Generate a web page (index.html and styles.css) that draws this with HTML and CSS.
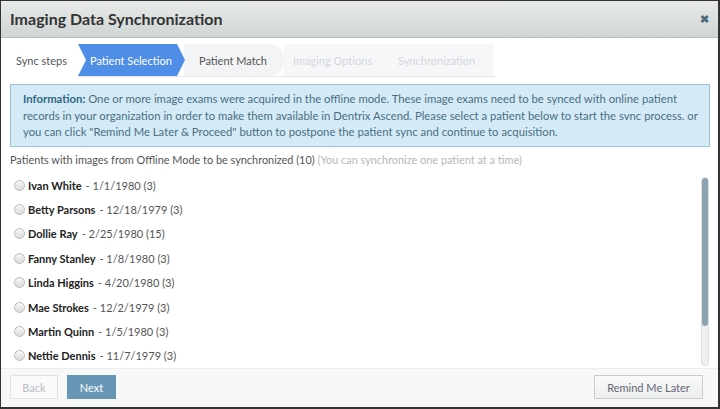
FILE: index.html
```html
<!DOCTYPE html>
<html>
<head>
<meta charset="utf-8">
<link rel="stylesheet" href="styles.css">
</head>
<body>
<div class="dialog">
  <div class="titlebar">
    <div class="title">Imaging Data Synchronization</div>
    <div class="close">&#x2716;</div>
  </div>
  <div class="steps">
    <div class="step-label">Sync steps</div>
    <div class="step-track">
      <div class="step active">Patient Selection</div>
      <div class="step next">Patient Match</div>
      <div class="step disabled">Imaging Options</div>
      <div class="step disabled">Synchronization</div>
    </div>
  </div>
  <div class="info"><b>Information:</b> One or more image exams were acquired in the offline mode. These image exams need to be synced with online patient<br>records in your organization in order to make them available in Dentrix Ascend. Please select a patient below to start the svnc process. or<br>you can click "Remind Me Later &amp; Proceed" button to postpone the patient sync and continue to acquisition.</div>
  <div class="caption">Patients with images from Offline Mode to be synchronized (10) <span class="muted">(You can synchronize one patient at a time)</span></div>
  <div class="list-wrap">
    <ul class="list">
      <li><span class="radio"></span><b>Ivan White</b> - 1/1/1980 (3)</li>
      <li><span class="radio"></span><b>Betty Parsons</b> - 12/18/1979 (3)</li>
      <li><span class="radio"></span><b>Dollie Ray</b> - 2/25/1980 (15)</li>
      <li><span class="radio"></span><b>Fanny Stanley</b> - 1/8/1980 (3)</li>
      <li><span class="radio"></span><b>Linda Higgins</b> - 4/20/1980 (3)</li>
      <li><span class="radio"></span><b>Mae Strokes</b> - 12/2/1979 (3)</li>
      <li><span class="radio"></span><b>Martin Quinn</b> - 1/5/1980 (3)</li>
      <li><span class="radio"></span><b>Nettie Dennis</b> - 11/7/1979 (3)</li>
    </ul>
    <div class="scrollbar"><div class="thumb"></div></div>
  </div>
  <div class="footer">
    <div class="btn back">Back</div>
    <div class="btn primary">Next</div>
    <div class="spacer"></div>
    <div class="btn remind">Remind Me Later</div>
  </div>
</div>
</body>
</html>
```
FILE: styles.css
```css
* { box-sizing: border-box; }
html, body { margin: 0; padding: 0; }
body {
  width: 720px; height: 409px; overflow: hidden;
  font-family: Lato, "Open Sans", sans-serif;
  color: #444;
  background: #222;
}
.dialog {
  width: 720px; height: 409px;
  border: 1px solid #333;
  border-width: 1px 2px 2px 1px;
  background: #fff;
  display: flex; flex-direction: column;
}
.dialog > * { flex-shrink: 0; }
.titlebar {
  height: 37px;
  background: linear-gradient(#e7eae9, #cfd6d4);
  border-bottom: 1px solid #b7bfbd;
  display: flex; align-items: center;
  padding: 0 9px 1px 9px;
}
.title {
  flex: 1;
  font-size: 16px; font-weight: 700; color: #333;
}
.close { font-size: 11px; color: #4e6b7c; font-weight: 700; }
.steps {
  display: flex; align-items: center;
  height: 41px;
  padding: 4px 0 0 15px;
}
.step-label { font-size: 11px; color: #555; width: 62px; }
.step-track {
  display: flex; height: 33px;
  width: 417px;
  border-bottom: 1px solid #e3e6e8;
}
.step {
  height: 32px; display: flex; align-items: center;
  font-size: 11px;
  clip-path: polygon(0 0, calc(100% - 8px) 0, 100% 50%, calc(100% - 8px) 100%, 0 100%, 8px 50%);
}
.step.active {
  background: #4f8ee6; color: #fff;
  width: 107px; padding-left: 12px;
}
.step.next {
  background: #f2f4f6; color: #555;
  width: 100px; padding-left: 15px;
  margin-left: -1px;
  border-radius: 0 14px 14px 0;
  clip-path: none;
}
.step.disabled {
  color: #d4d8db; background: #f6f7f8;
  width: 105px; padding-left: 9px;
  clip-path: none;
}
.info {
  margin: 5px 8px 0 9px;
  height: 63px;
  background: #d4eaf6;
  border: 1px solid #9ac3d3;
  padding: 6px 2px 0 12px;
  font-size: 11.3px; line-height: 16.5px; color: #4a6f83;
  white-space: nowrap;
}
.info b { color: #2f6883; }
.caption {
  font-size: 10.9px; color: #555;
  padding: 6px 0 0 9px;
  height: 22px;
}
.muted { color: #b4b8bb; }
.list-wrap {
  flex: 1 1 auto; min-height: 0; display: flex;
  padding: 0 9px 0 9px;
  border-bottom: 1px solid #eaeced;
  overflow: hidden;
}
.list {
  flex: 1; list-style: none; margin: 0; padding: 4px 0 0 4px;
}
.list li {
  height: 24.4px; display: flex; align-items: center;
  font-size: 11px; color: #555;
}
.list li b { color: #222; margin-right: 4px; font-weight: 700; }
.radio {
  width: 11px; height: 11px; border-radius: 50%;
  border: 1px solid #b8bcbe;
  background: linear-gradient(#f7f7f7, #dcdcdc);
  margin-right: 3px;
}
.scrollbar {
  width: 8px; margin: 8px 0 2px 0;
  border-radius: 4px; background: #eef0f1;
  border: 1px solid #dde0e2;
  display: flex; flex-direction: column;
}
.thumb {
  height: 79%; background: #8da3b1; border-radius: 4px;
}
.footer {
  height: 38px;
  background: #f7f8f8;
  display: flex; align-items: center;
  padding: 0 15px 2px 9px;
}
.btn {
  height: 24px; display: flex; align-items: center; justify-content: center;
  font-size: 11px;
}
.back {
  width: 48px; border: 1px solid #dfe2e4; color: #b7bcbf; background: #fafafa;
}
.primary {
  width: 49px; margin-left: 9px; background: #6897b5; color: #fff;
}
.spacer { flex: 1; }
.remind {
  width: 109px; border: 1px solid #c8ccce; color: #667; background: linear-gradient(#fafafa, #eceeef);
}
```
